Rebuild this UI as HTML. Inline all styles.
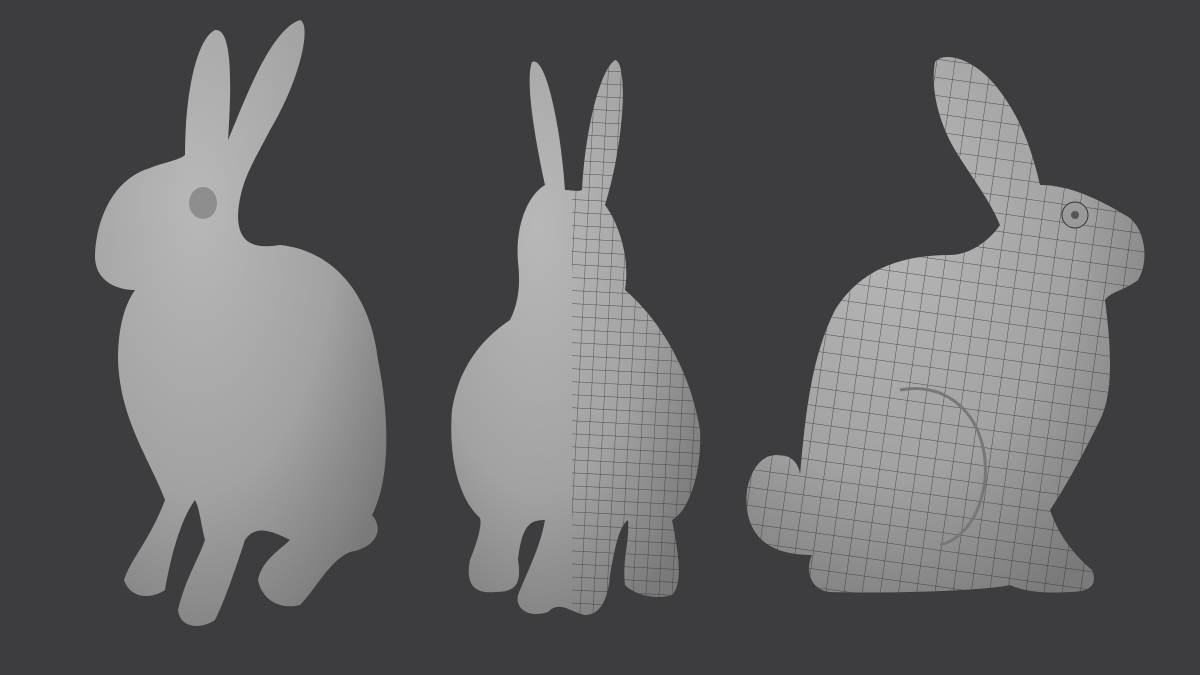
<!DOCTYPE html>
<html><head><style>html,body{margin:0;padding:0;background:#3d3d3f;width:1200px;height:675px;overflow:hidden}</style></head>
<body>
<svg width="1200" height="675" viewBox="0 0 1200 675" xmlns="http://www.w3.org/2000/svg">
<defs>
<radialGradient id="g" cx="35%" cy="30%" r="80%">
<stop offset="0" stop-color="#b8b8b8"/><stop offset="0.6" stop-color="#a2a2a2"/><stop offset="1" stop-color="#7a7a7a"/>
</radialGradient>
<pattern id="mesh" width="18" height="18" patternUnits="userSpaceOnUse" patternTransform="rotate(8)">
<path d="M0 0H18M0 0V18" stroke="#2e2e2e" stroke-width="1" fill="none" opacity="0.75"/>
</pattern>
<pattern id="mesh2" width="13" height="13" patternUnits="userSpaceOnUse" patternTransform="rotate(3)">
<path d="M0 0H13M0 0V13" stroke="#2e2e2e" stroke-width="0.9" fill="none" opacity="0.75"/>
</pattern>
<clipPath id="half"><rect x="572" y="0" width="200" height="675"/></clipPath>
</defs>
<rect width="1200" height="675" fill="#3d3d3f"/>

<!-- rabbit 1 -->
<path fill="url(#g)" d="M95 258 C95 225 110 180 150 168 C165 162 180 160 185 155 C185 100 195 40 215 30 C232 28 232 80 228 140 C245 100 270 30 300 20 C312 25 300 80 270 130 C255 160 240 180 238 215 C238 240 250 250 280 245 C330 250 370 290 378 360 C390 420 390 480 372 515 C385 530 375 548 350 552 C330 560 315 590 300 605 C280 610 262 600 258 580 C262 560 280 550 290 540 C270 530 255 525 245 540 C235 570 225 600 215 620 C200 630 180 628 178 610 C185 580 198 560 205 540 C200 520 200 510 195 500 C180 520 170 560 165 590 C150 600 130 598 124 580 C130 560 150 540 165 500 C150 460 120 420 118 360 C118 320 128 300 135 290 C115 290 96 280 95 258Z"/>
<ellipse cx="203" cy="203" rx="14" ry="16" fill="#8e8e8e"/>

<!-- rabbit 2 -->
<g>
<path fill="url(#g)" d="M518 262 C515 225 528 195 545 185 C535 140 525 80 532 62 C545 55 560 120 565 190 C572 190 578 192 582 190 C585 130 600 70 615 60 C628 62 625 140 605 205 C620 225 630 260 625 290 C660 320 690 370 700 430 C702 470 690 510 672 520 C680 560 682 585 672 595 C655 600 635 595 625 585 C622 560 630 540 628 520 C620 525 615 545 610 575 C608 600 600 615 585 615 C570 612 560 600 548 612 C530 618 515 610 518 595 C528 570 540 548 545 520 C530 520 522 525 518 560 C522 585 515 592 495 592 C475 594 465 585 470 560 C478 540 482 525 480 518 C460 500 448 460 452 410 C458 370 480 340 510 320 C520 300 520 280 518 262Z"/>
<path d="M518 262 C515 225 528 195 545 185 C535 140 525 80 532 62 C545 55 560 120 565 190 C572 190 578 192 582 190 C585 130 600 70 615 60 C628 62 625 140 605 205 C620 225 630 260 625 290 C660 320 690 370 700 430 C702 470 690 510 672 520 C680 560 682 585 672 595 C655 600 635 595 625 585 C622 560 630 540 628 520 C620 525 615 545 610 575 C608 600 600 615 585 615 C570 612 560 600 548 612 C530 618 515 610 518 595 C528 570 540 548 545 520 C530 520 522 525 518 560 C522 585 515 592 495 592 C475 594 465 585 470 560 C478 540 482 525 480 518 C460 500 448 460 452 410 C458 370 480 340 510 320 C520 300 520 280 518 262Z" fill="url(#mesh2)" clip-path="url(#half)"/>
</g>

<!-- rabbit 3 -->
<g>
<path fill="url(#g)" d="M935 62 C945 50 975 60 995 85 C1020 115 1032 150 1040 185 C1070 185 1100 200 1125 215 C1145 225 1150 260 1138 280 C1125 290 1110 292 1105 300 C1110 340 1115 390 1100 420 C1085 450 1070 480 1050 510 C1060 540 1080 560 1092 570 C1098 585 1090 592 1070 592 C1040 594 1020 590 1010 585 C990 590 900 594 830 592 C810 590 805 570 812 555 C780 555 755 545 748 515 C742 485 755 460 770 456 C795 450 800 470 800 475 C805 420 810 360 835 310 C860 270 900 255 950 255 C970 255 990 240 1000 225 C990 200 970 175 955 150 C940 125 930 90 935 62Z"/>
<path d="M935 62 C945 50 975 60 995 85 C1020 115 1032 150 1040 185 C1070 185 1100 200 1125 215 C1145 225 1150 260 1138 280 C1125 290 1110 292 1105 300 C1110 340 1115 390 1100 420 C1085 450 1070 480 1050 510 C1060 540 1080 560 1092 570 C1098 585 1090 592 1070 592 C1040 594 1020 590 1010 585 C990 590 900 594 830 592 C810 590 805 570 812 555 C780 555 755 545 748 515 C742 485 755 460 770 456 C795 450 800 470 800 475 C805 420 810 360 835 310 C860 270 900 255 950 255 C970 255 990 240 1000 225 C990 200 970 175 955 150 C940 125 930 90 935 62Z" fill="url(#mesh)"/>
<circle cx="1075" cy="215" r="13" fill="#9a9a9a" stroke="#333" stroke-width="1"/>
<circle cx="1075" cy="215" r="4" fill="#555"/>
<path d="M900 390 C950 380 990 420 985 480 C980 520 960 540 940 545" fill="none" stroke="#777" stroke-width="3"/>
</g>
</svg>
</body></html>
